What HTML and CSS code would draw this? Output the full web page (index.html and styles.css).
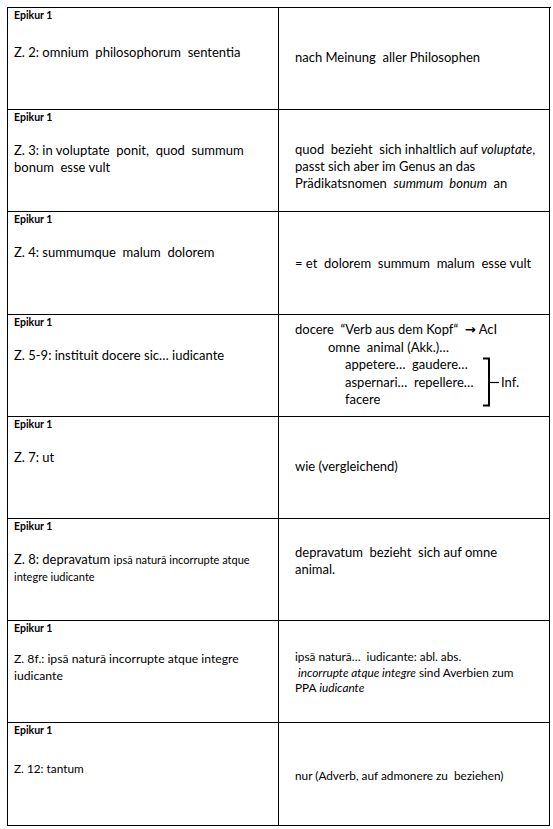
FILE: index.html
```html
<!DOCTYPE html>
<html lang="de">
<head>
<meta charset="utf-8">
<title>Epikur 1</title>
<link rel="stylesheet" href="styles.css">
</head>
<body>
<div class="sheet">
  <div class="cell left">
    <div class="tag">Epikur 1</div>
    <p class="ref first">Z. 2: omnium&nbsp; philosophorum&nbsp; sententia</p>
  </div>
  <div class="cell right pad-a">
    <p>nach Meinung&nbsp; aller Philosophen</p>
  </div>

  <div class="cell left">
    <div class="tag">Epikur 1</div>
    <p class="ref">Z. 3: in voluptate&nbsp; ponit,&nbsp; quod&nbsp; summum bonum&nbsp; esse vult</p>
  </div>
  <div class="cell right pad-b">
    <p>quod&nbsp; bezieht&nbsp; sich inhaltlich auf <i>voluptate</i>, passt sich aber im Genus an das Prädikatsnomen&nbsp; <i>summum&nbsp; bonum</i>&nbsp; an</p>
  </div>

  <div class="cell left">
    <div class="tag">Epikur 1</div>
    <p class="ref">Z. 4: summumque&nbsp; malum&nbsp; dolorem</p>
  </div>
  <div class="cell right pad-c">
    <p>= et&nbsp; dolorem&nbsp; summum&nbsp; malum&nbsp; esse vult</p>
  </div>

  <div class="cell left">
    <div class="tag">Epikur 1</div>
    <p class="ref">Z. 5-9: instituit docere sic… iudicante</p>
  </div>
  <div class="cell right pad-d">
    <p class="line">docere&nbsp; “Verb aus dem Kopf“&nbsp; <span class="arrow">→</span> AcI</p>
    <p class="line indent1">omne&nbsp; animal (Akk.)…</p>
    <div class="infs">
      <div class="inf-list">
        <p class="line">appetere… &nbsp;gaudere…</p>
        <p class="line">aspernari… &nbsp;repellere…</p>
        <p class="line">facere</p>
      </div>
      <svg class="bracket" width="16" height="50" viewBox="0 0 16 50" aria-hidden="true">
        <path d="M0 1.5 H6 V48.5 H0" fill="none" stroke="#000" stroke-width="2"/>
        <path d="M6 25.5 H16" fill="none" stroke="#000" stroke-width="1.2"/>
      </svg>
      <span class="inf-label">Inf.</span>
    </div>
  </div>

  <div class="cell left">
    <div class="tag">Epikur 1</div>
    <p class="ref">Z. 7: ut</p>
  </div>
  <div class="cell right pad-e">
    <p>wie (vergleichend)</p>
  </div>

  <div class="cell left">
    <div class="tag">Epikur 1</div>
    <p class="ref">Z. 8: depravatum <span class="small">ipsā naturā incorrupte atque integre iudicante</span></p>
  </div>
  <div class="cell right pad-f">
    <p>depravatum&nbsp; bezieht&nbsp; sich auf omne<br>animal.</p>
  </div>

  <div class="cell left">
    <div class="tag">Epikur 1</div>
    <p class="ref mid">Z. 8f.: ipsā naturā incorrupte atque integre iudicante</p>
  </div>
  <div class="cell right pad-g small-cell">
    <p>ipsā naturā… &nbsp;iudicante: abl. abs.<br>&nbsp;<i>incorrupte atque integre</i> sind Averbien zum<br>PPA <i>iudicante</i></p>
  </div>

  <div class="cell left">
    <div class="tag">Epikur 1</div>
    <p class="ref last">Z. 12: tantum</p>
  </div>
  <div class="cell right pad-h small-cell">
    <p>nur (Adverb, auf admonere zu&nbsp; beziehen)</p>
  </div>
</div>
</body>
</html>
```

FILE: styles.css
```css
html, body {
  margin: 0;
  padding: 0;
  background: #fff;
}

body {
  padding: 7px;
  font-family: Lato, "Open Sans", "Liberation Sans", sans-serif;
  color: #000;
  font-size: 13px;
  line-height: 17px;
}

p {
  margin: 0;
}

.sheet {
  display: grid;
  grid-template-columns: 271px 271px;
  grid-template-rows: 102px 102px 103px 102px 102px 102px 102px 103px;
  border-top: 1px solid #000;
  border-left: 1px solid #000;
  width: 543px;
}

.cell {
  border-right: 1px solid #000;
  border-bottom: 1px solid #000;
  overflow: hidden;
}

.left {
  padding: 1px 6px 0 6px;
}

.right {
  padding-left: 16px;
  padding-right: 8px;
}

.tag {
  font-weight: 700;
  font-size: 10.5px;
  line-height: 12px;
}

.ref {
  margin-top: 19px;
}

.ref.first {
  margin-top: 23px;
}

.ref.mid {
  font-size: 12.2px;
  margin-top: 16px;
}

.ref.last {
  font-size: 11.8px;
  margin-top: 24px;
}

.small {
  font-size: 11px;
}

.small-cell {
  font-size: 11.8px;
  line-height: 15.5px;
}

.pad-a { padding-top: 41px; }
.pad-b { padding-top: 31px; }
.pad-c { padding-top: 43px; }
.pad-d { padding-top: 6px; }
.pad-e { padding-top: 41px; }
.pad-f { padding-top: 25px; }
.pad-g { padding-top: 28px; }
.pad-h { padding-top: 45px; }

.line {
  line-height: 17.6px;
  white-space: nowrap;
}

.indent1 {
  padding-left: 33px;
}

.arrow {
  font-family: "DejaVu Sans", sans-serif;
  font-size: 13px;
  font-weight: 700;
}

.infs {
  display: flex;
  align-items: center;
  padding-left: 50px;
}

.inf-list {
  width: 138px;
}

.bracket {
  display: block;
  margin-top: -2px;
}

.inf-label {
  margin-left: 2px;
}
```
